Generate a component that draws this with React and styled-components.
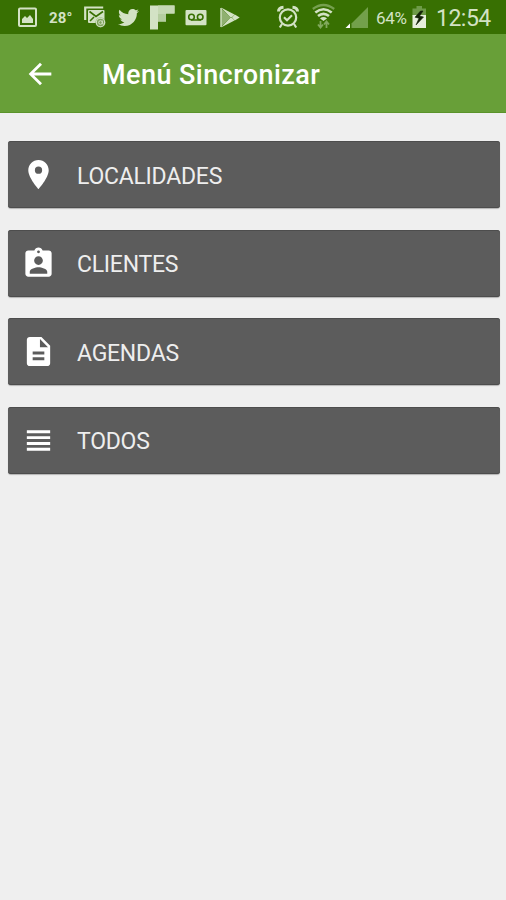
import styled, { createGlobalStyle } from 'styled-components'
import { MdArrowBack, MdLocationOn, MdAssignmentInd, MdDescription, MdViewHeadline } from 'react-icons/md'
import { FaTwitter } from 'react-icons/fa'

const GlobalStyle = createGlobalStyle`
  body {
    margin: 0;
    background: #efefef;
    font-family: Roboto, "Liberation Sans", sans-serif;
  }
`
const Screen = styled.div`
  min-height: 900px;
  background: #efefef;
  overflow: hidden;
`
const StatusBar = styled.div`
  display: flex;
  height: 34px;
  background: #387002;
  color: #d3e2c5;
`
const StatusIcon = styled.svg`
  display: block;
  flex: none;
  width: ${props => props.$w}px;
  height: 34px;
  margin-left: ${props => props.$gap}px;
`
const TwitterIcon = styled(FaTwitter)`
  flex: none;
  width: 21px;
  height: 21px;
  margin: 7px 0 0 12px;
`
const StatusText = styled.span`
  flex: none;
  width: ${props => props.$w}px;
  margin-left: ${props => props.$gap}px;
  font-size: ${props => props.$size}px;
  font-weight: ${props => props.$weight || 400};
  letter-spacing: ${props => props.$spacing || 0}px;
  line-height: ${props => props.$line || 36}px;
  white-space: nowrap;
`
const AppBar = styled.header`
  display: flex;
  align-items: center;
  box-sizing: border-box;
  height: 79px;
  padding: 2px 0 0 23px;
  background: #689f38;
  border-bottom: 1px solid #5a932a;
  color: #fff;
`
const BackIcon = styled(MdArrowBack)`
  width: 34px;
  height: 34px;
`
const Title = styled.h1`
  margin: 2px 0 0 45px;
  font-size: 27px;
  font-weight: 500;
  letter-spacing: 0.44px;
  line-height: 32px;
`
const Menu = styled.nav`
  display: flex;
  flex-direction: column;
  gap: 21.6px;
  padding: 28px 6px 0 8px;
`
const MenuButton = styled.button`
  display: flex;
  align-items: center;
  height: 67px;
  padding: 0 0 0 13px;
  background: #5c5c5c;
  border: none;
  border-radius: 3px;
  box-shadow: inset 0 1px #4d4d4d, inset 0 -1px #4d4d4d, 0 1px 1px rgba(0, 0, 0, 0.25);
  color: #fff;
  font-family: inherit;
  font-size: 23px;
  text-align: left;

  svg {
    width: 35px;
    height: 35px;
  }
`
const Label = styled.span`
  margin: 3px 0 0 21px;
  color: #eee;
  letter-spacing: -0.25px;
`

const items = [
  { label: 'LOCALIDADES', Icon: MdLocationOn },
  { label: 'CLIENTES', Icon: MdAssignmentInd },
  { label: 'AGENDAS', Icon: MdDescription },
  { label: 'TODOS', Icon: MdViewHeadline },
]

const Status = () => (
  <StatusBar>
    {/* picture */}
    <StatusIcon $w={19} $gap={18} viewBox="0 0 19 34" fill="none">
      <rect x="1" y="8.5" width="17" height="17.5" rx="1" stroke="currentColor" strokeWidth="2" />
      <path d="M4 23v-4l3-3 2 2 3-3 3 4v4z" fill="currentColor" />
    </StatusIcon>
    <StatusText $w={24} $gap={12} $size={15} $weight={700} $spacing={0.1}>28°</StatusText>
    {/* mail with a mention */}
    <StatusIcon $w={22} $gap={11} viewBox="0 0 22 34" fill="none">
      <path d="M1.2 20V7.5h18" stroke="currentColor" strokeWidth="2.2" />
      <rect x="4" y="10" width="16.5" height="13" rx="1" fill="currentColor" />
      <path d="M5.5 11.5l6.5 5 7-5M6 21l4-4" stroke="#387002" strokeWidth="1.6" />
      <circle cx="16.5" cy="22.5" r="5" fill="#7fa35c" />
      <circle cx="16.5" cy="22.5" r="4.2" stroke="currentColor" strokeWidth="1.1" />
      <path d="M18.3 20.5v3.2q1 1 1.6 0M18.3 22.5a1.8 1.8 0 1 1-3.6 0a1.8 1.8 0 0 1 3.6 0" stroke="currentColor" />
    </StatusIcon>
    <TwitterIcon />
    {/* flipboard */}
    <StatusIcon $w={25} $gap={11} viewBox="0 0 25 34">
      <path d="M0 5.5h24.5v8H16v8H8v8H0z" fill="currentColor" />
      <path d="M8 13.5h8v8H8z" fill="#b5cda0" />
      <path d="M8 5.5h16.5v8H8z" fill="#c6d9b4" />
    </StatusIcon>
    {/* voicemail */}
    <StatusIcon $w={22} $gap={10} viewBox="0 0 22 34" fill="none">
      <rect x="0.5" y="10" width="21" height="15.3" rx="1" fill="currentColor" />
      <circle cx="6.5" cy="17" r="2.8" stroke="#387002" strokeWidth="1.6" />
      <circle cx="15.2" cy="17" r="2.8" stroke="#387002" strokeWidth="1.6" />
      <path d="M6 20h10" stroke="#387002" strokeWidth="1.5" />
    </StatusIcon>
    {/* play store */}
    <StatusIcon $w={21} $gap={13} viewBox="0 0 21 34">
      <path d="M1 8l9.5 9.5L1 27z" fill="#8fb070" />
      <path d="M1 7.5l13.5 7-3.4 3.4zM1 27.5l13.5-7-3.4-3.4zM14.8 14.5l4.9 3-4.9 3-2.8-3z" fill="currentColor" />
      <path d="M1 8v19" stroke="currentColor" strokeWidth="1.4" />
    </StatusIcon>
    {/* alarm */}
    <StatusIcon $w={22} $gap={36} viewBox="0 0 22 34" fill="none" stroke="currentColor">
      <circle cx="11" cy="17.5" r="8.2" strokeWidth="2.2" />
      <path d="M7 17.3l3 3 5-5" strokeWidth="2.2" />
      <path d="M1.5 11.5q0-4 5-4.3M20.5 11.5q0-4-5-4.3" strokeWidth="3" />
      <path d="M5 24l-2.2 3.5M17 24l2.2 3.5" strokeWidth="2.2" />
    </StatusIcon>
    {/* wifi with traffic arrows */}
    <StatusIcon $w={23} $gap={13} viewBox="0 0 23 34" fill="none">
      <path d="M0.8 9q10.7-8 21.4 0" stroke="#76a04f" strokeWidth="2.2" />
      <path d="M3.3 12.5q8.2-6.5 16.4 0M6 16q5.5-4.4 11 0" stroke="currentColor" strokeWidth="2.6" />
      <path d="M8 18.5q3.5-2.8 7 0l-3.5 2.5z" fill="currentColor" />
      <path d="M8.5 21v6M6 24.5l2.5 3 2.5-3M14.5 28v-6M12 24.5l2.5-3 2.5 3" stroke="#82a95e" strokeWidth="1.8" />
    </StatusIcon>
    {/* signal */}
    <StatusIcon $w={24} $gap={10} viewBox="0 0 24 34">
      <path d="M6.5 23.5L23 7v21H6.5z" fill="#73a04b" />
      <path d="M0.5 28L5 23.5V28z" fill="#fff" />
    </StatusIcon>
    <StatusText $w={32} $gap={7} $size={17} $spacing={-0.3}>64%</StatusText>
    {/* charging battery */}
    <StatusIcon $w={15} $gap={4} viewBox="0 0 15 34">
      <path d="M0.5 8.5h4V6h5.5v2.5h4V16H0.5z" fill="#6e9b48" />
      <path d="M0.5 15h13.5v13H0.5z" fill="#e6efdc" />
      <path d="M8.5 11L3 17.2l4 1L4 25l7.5-8-4-1 3.5-5z" fill="#132207" stroke="#132207" strokeWidth="0.6" />
    </StatusIcon>
    <StatusText $w={56} $gap={9} $size={23} $spacing={-0.5} $line={37}>12:54</StatusText>
  </StatusBar>
)

const App = () => {
  return (
    <Screen>
      <GlobalStyle />
      <Status />
      <AppBar>
        <BackIcon />
        <Title>Menú Sincronizar</Title>
      </AppBar>
      <Menu>
        {items.map(({ label, Icon }) => (
          <MenuButton key={label}>
            <Icon />
            <Label>{label}</Label>
          </MenuButton>
        ))}
      </Menu>
    </Screen>
  )
}

export default App
